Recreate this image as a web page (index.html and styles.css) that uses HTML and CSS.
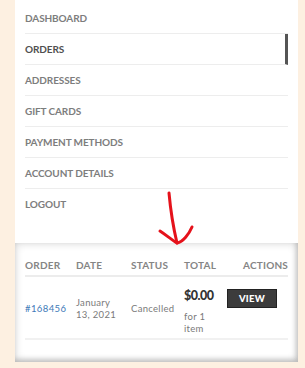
FILE: index.html
```html
<!DOCTYPE html>
<html lang="en">
<head>
    <meta charset="UTF-8">
    <meta name="viewport" content="width=device-width, initial-scale=1.0">
    <title>My account - Orders</title>
    <link rel="stylesheet" href="styles.css">
</head>
<body>
    <div class="page">
        <div class="account-nav">
            <a class="nav-item" href="#">Dashboard</a>
            <a class="nav-item active" href="#">Orders</a>
            <a class="nav-item" href="#">Addresses</a>
            <a class="nav-item" href="#">Gift Cards</a>
            <a class="nav-item" href="#">Payment Methods</a>
            <a class="nav-item" href="#">Account Details</a>
            <a class="nav-item last" href="#">Logout</a>
        </div>

        <svg class="arrow" width="45" height="60" viewBox="0 0 45 60">
            <path d="M14 3 C15 14, 17 32, 22 53" />
            <path d="M5 41 C11 45, 17 50, 22 53 C28 52, 34 44, 37 37" />
        </svg>

        <div class="orders">
            <div class="orders-table">
                <div class="th">Order</div>
                <div class="th">Date</div>
                <div class="th">Status</div>
                <div class="th">Total</div>
                <div class="th right">Actions</div>

                <div class="td"><a class="order-link" href="#">#168456</a></div>
                <div class="td">January<br>13, 2021</div>
                <div class="td">Cancelled</div>
                <div class="td total">
                    <span class="amount">$0.00</span>
                    <span class="items">for 1<br>item</span>
                </div>
                <div class="td action"><a class="view-btn" href="#">View</a></div>
            </div>
        </div>
    </div>
</body>
</html>
```

FILE: styles.css
```css
body {
    margin: 0;
    background-color: #fdf0e1;
    font-family: Lato, "Open Sans", sans-serif;
}
.page {
    position: relative;
    margin-left: 15px;
    width: 283px;
    height: 362px;
    background-color: #fff;
    display: flex;
    flex-direction: column;
}
.account-nav {
    display: flex;
    flex-direction: column;
    padding: 3px 10px 0 10px;
    height: 240px;
}
.nav-item {
    display: block;
    height: 30px;
    line-height: 31px;
    border-bottom: 1px solid #ededed;
    color: #7d7d7d;
    font-size: 10px;
    font-weight: 700;
    text-transform: uppercase;
    text-decoration: none;
    letter-spacing: -0.1px;
}
.nav-item.active {
    color: #505050;
    border-right: 3px solid #555;
}
.nav-item.last {
    border-bottom: none;
}
.arrow {
    position: absolute;
    left: 140px;
    top: 190px;
}
.arrow path {
    fill: none;
    stroke: #e5121b;
    stroke-width: 3;
    stroke-linecap: round;
    stroke-linejoin: round;
}
.orders {
    flex: 1;
    padding: 14px 10px 0 10px;
    box-shadow: inset 0 0 9px rgba(0, 0, 0, 0.18), inset -2px -3px 5px rgba(0, 0, 0, 0.16);
}
.orders-table {
    display: grid;
    grid-template-columns: 51px 55px 53px 43px 1fr;
}
.th {
    height: 16px;
    padding-top: 2px;
    border-bottom: 2px solid #ececec;
    color: #858585;
    font-size: 10px;
    font-weight: 700;
    text-transform: uppercase;
    letter-spacing: 0.2px;
}
.th.right {
    text-align: right;
}
.td {
    padding: 12px 0 9px 0;
    border-bottom: 2px solid #f1f1f1;
    color: #7a7a7a;
    font-size: 9.5px;
    letter-spacing: 0.3px;
    line-height: 12px;
    display: flex;
    align-items: center;
}
.order-link {
    color: #3d79b8;
    text-decoration: none;
    letter-spacing: 0.4px;
}
.total {
    flex-direction: column;
    align-items: flex-start;
    padding-bottom: 3px;
}
.amount {
    color: #333;
    font-size: 12.5px;
    font-weight: 900;
    letter-spacing: -0.5px;
    line-height: 14px;
    margin-bottom: 8px;
}
.items {
    line-height: 12px;
}
.action {
    align-items: flex-start;
}
.view-btn {
    display: block;
    width: 48px;
    height: 17px;
    line-height: 17px;
    background-color: #3c3c3c;
    border: 1px solid #222;
    color: #fff;
    font-size: 9.5px;
    font-weight: 900;
    text-align: center;
    text-transform: uppercase;
    text-decoration: none;
}
```
